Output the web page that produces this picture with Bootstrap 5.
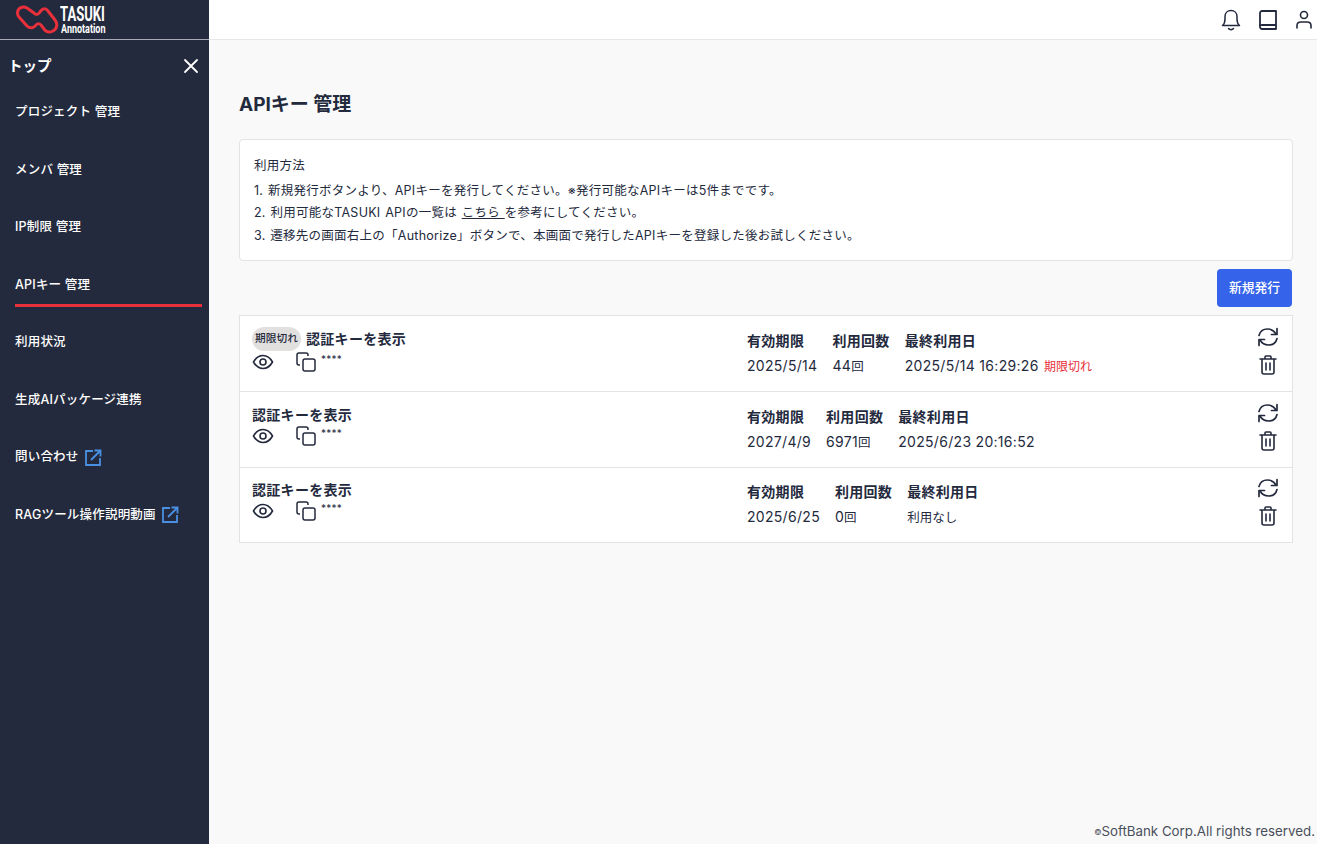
<!DOCTYPE html>
<html lang="ja">
<head>
<meta charset="utf-8">
<title>APIキー 管理</title>
<link href="https://cdn.jsdelivr.net/npm/bootstrap@5.3.0/dist/css/bootstrap.min.css" rel="stylesheet">
<style>
html,body{height:100%;}
body{font-family:"Inter","Noto Sans CJK JP",sans-serif;color:#242a3d;background:#f9f9f9;overflow:hidden;}
.app-shell{height:844px;}
.side-panel{width:209px;flex:none;background:#242a3d;color:#fff;}
.side-logo{height:40px;border-bottom:1px solid #a9acb8;padding-left:15px;gap:1px;}
.logo-words{color:#fff;font-family:"Liberation Sans Narrow","Roboto",sans-serif;width:50px;white-space:nowrap;}
.logo-top{font-size:21px;font-weight:700;line-height:17px;height:17px;transform:scaleX(.62);transform-origin:left center;}
.logo-sub{font-size:12.5px;font-weight:700;line-height:10px;height:10px;margin-top:1px;margin-left:1px;transform:scaleX(.72);transform-origin:left center;}
.side-top{height:51px;padding:0 10px 0 8px;font-size:14.5px;font-weight:700;}
.side-item{height:57.6px;padding:0 7px 0 15px;font-size:12.5px;letter-spacing:.2px;font-weight:500;color:#fff;text-decoration:none;display:flex;align-items:center;gap:5px;position:relative;}
.side-item.on::after{content:"";position:absolute;left:15px;right:7px;bottom:6.900px;height:3px;background:#e8303a;}
.side-list{margin-top:-7.500px;}
.top-strip{height:40px;background:#fff;border-bottom:1px solid #e7e7e7;padding-right:4px;gap:18px;}
.main-area{padding:0 24px 0 30px;}
.page-title{font-size:19px;font-weight:700;margin:54px 0 23px;line-height:22px;}
.guide-box{border:1px solid #e3e3e3;border-radius:4px;background:#fff;height:122px;padding:15px 14px;font-size:12.5px;letter-spacing:.25px;word-spacing:1px;line-height:22.5px;margin-bottom:8px;}
.guide-title{margin-bottom:2px;}
.guide-box a{color:inherit;}
.new-btn{background:#3563e9;border:0;border-radius:4px;color:#fff;font-size:12.8px;font-weight:500;width:75px;height:38px;padding:0;margin-right:1px;}
.new-btn:hover{background:#3563e9;}
.key-list{margin-top:8px;border:1px solid #e3e3e3;background:#fff;}
.key-row{height:76px;padding:0 12px;border-bottom:1px solid #e3e3e3;}
.key-row:last-child{border-bottom:0;height:74px;}
.key-left{width:495px;flex:none;margin-bottom:8px;}
.key-name{font-size:14px;letter-spacing:.3px;font-weight:700;line-height:20px;}
.expired-chip{background:#e2dfdf;border-radius:12px;font-size:10.700px;letter-spacing:0;font-weight:500;width:49px;height:24px;display:inline-flex;align-items:center;justify-content:center;margin-right:5px;}
.key-icons{gap:22px;height:22px;}
.copy-group{gap:5px;}
.stars{font-size:10px;letter-spacing:.2px;line-height:12px;align-self:flex-start;margin-top:1px;}
.meta-grid{font-size:14px;letter-spacing:.3px;gap:15px;flex:1;}
.meta-head{font-weight:600;line-height:20px;margin-bottom:5px;}
.meta-val{line-height:20px;white-space:nowrap;}
.jp-val{font-size:12.500px;letter-spacing:0;}
.expired-text{color:#e8303a;font-size:12px;letter-spacing:0;margin-left:1px;}
.action-col{width:24px;flex:none;gap:8px;margin-bottom:6px;}
.copyright{position:absolute;right:2px;bottom:3px;font-size:13.3px;line-height:18px;color:#4a4f5c;}
.copyright small{font-size:8px;vertical-align:1px;}
</style>
</head>
<body>
<div class="app-shell d-flex position-relative">
  <aside class="side-panel d-flex flex-column">
    <div class="side-logo d-flex align-items-center">
      <svg width="44" height="30" viewBox="0 0 44 30" fill="none" stroke="#e8303a" stroke-width="3" stroke-linejoin="round"><path d="M2.500 8C2.500 3 8 .5 12 3L19 8C21 10 23 10 25 7C27 3 31 3 33 6L40 15C43 19 42 24 38 26C34 28 31 27 29 24L26 20C24 18 23 18 21 20C19 23 15 24 12 21L4 12C3 11 2.500 10 2.500 8Z"/></svg>
      <div class="logo-words"><div class="logo-top">TASUKI</div><div class="logo-sub">Annotation</div></div>
    </div>
    <div class="side-top d-flex align-items-center justify-content-between">
      <span>トップ</span>
      <svg width="16" height="16" viewBox="0 0 16 16" stroke="#fff" stroke-width="1.800" stroke-linecap="round"><path d="M2 2L14 14M14 2L2 14"/></svg>
    </div>
    <nav class="side-list">
      <a class="side-item" href="#">プロジェクト 管理</a>
      <a class="side-item" href="#">メンバ 管理</a>
      <a class="side-item" href="#">IP制限 管理</a>
      <a class="side-item on" href="#">APIキー 管理</a>
      <a class="side-item" href="#">利用状況</a>
      <a class="side-item" href="#">生成AIパッケージ連携</a>
      <a class="side-item" href="#">問い合わせ
        <svg width="18" height="18" viewBox="0 0 18 18" fill="none" stroke="#4a90e2" stroke-width="1.800"><path d="M9 2H2V16H16V9"/><path d="M7 11L16 2M10.500 1.500H16.500V7.500"/></svg></a>
      <a class="side-item" href="#">RAGツール操作説明動画
        <svg width="18" height="18" viewBox="0 0 18 18" fill="none" stroke="#4a90e2" stroke-width="1.800"><path d="M9 2H2V16H16V9"/><path d="M7 11L16 2M10.500 1.500H16.500V7.500"/></svg></a>
    </nav>
  </aside>
  <div class="flex-grow-1 d-flex flex-column">
    <header class="top-strip d-flex align-items-center justify-content-end">
      <svg width="20" height="22" viewBox="0 0 20 22" fill="none" stroke="#242a3d" stroke-width="1.500" stroke-linejoin="round" stroke-linecap="round"><path d="M1.500 16.500C3.500 15 4 13 4 10V7.500C4 4 6.500 1.500 10 1.500S16 4 16 7.500V10C16 13 16.500 15 18.500 16.500Z"/><path d="M7.500 19.500C8.500 21 11.500 21 12.500 19.500"/></svg>
      <svg width="18" height="20" viewBox="0 0 18 20" fill="none" stroke="#242a3d" stroke-width="1.800" stroke-linejoin="round"><path d="M3 1H17V19H3C2 19 1 18 1 17V3C1 2 2 1 3 1Z"/><path d="M1 16C1 15 2 15 3 15H17"/></svg>
      <svg width="18" height="20" viewBox="0 0 18 20" fill="none" stroke="#242a3d" stroke-width="1.600" stroke-linecap="round"><circle cx="9" cy="5" r="3.500"/><path d="M2 18V15.500C2 13 4 12 6 12H12C14 12 16 13 16 15.500V18"/></svg>
    </header>
    <main class="main-area flex-grow-1">
      <h1 class="page-title">APIキー 管理</h1>
      <section class="guide-box">
        <div class="guide-title">利用方法</div>
        <div>1. 新規発行ボタンより、APIキーを発行してください。※発行可能なAPIキーは5件までです。</div>
        <div>2. 利用可能なTASUKI APIの一覧は <a href="#">こちら&nbsp;</a>を参考にしてください。</div>
        <div>3. 遷移先の画面右上の「Authorize」ボタンで、本画面で発行したAPIキーを登録した後お試しください。</div>
      </section>
      <div class="d-flex justify-content-end"><button class="btn new-btn" type="button">新規発行</button></div>
      <div class="key-list">
        <div class="key-row d-flex align-items-center">
          <div class="key-left">
            <div class="key-name d-flex align-items-center"><span class="expired-chip">期限切れ</span>認証キーを表示</div>
            <div class="key-icons d-flex align-items-center">
              <svg width="22" height="16" viewBox="0 0 22 16" fill="none" stroke="#242a3d" stroke-width="1.600"><path d="M1.500 8C4 3.500 7 1.500 11 1.500S18 3.500 20.500 8C18 12.500 15 14.500 11 14.500S4 12.500 1.500 8Z"/><circle cx="11" cy="8" r="3"/></svg>
              <div class="copy-group d-flex align-items-center">
                <svg width="20" height="20" viewBox="0 0 20 20" fill="none" stroke="#242a3d" stroke-width="1.500" stroke-linejoin="round"><rect x="7" y="7" width="12" height="12" rx="2"/><path d="M4 13H3C2 13 1 12 1 11V3C1 2 2 1 3 1H10C11 1 12 2 12 3V4"/></svg>
                <span class="stars">****</span>
              </div>
            </div>
          </div>
          <div class="meta-grid d-flex">
            <div><div class="meta-head">有効期限</div><div class="meta-val">2025/5/14</div></div>
            <div><div class="meta-head">利用回数</div><div class="meta-val">44<span class="jp-val">回</span></div></div>
            <div><div class="meta-head">最終利用日</div><div class="meta-val">2025/5/14 16:29:26 <span class="expired-text">期限切れ</span></div></div>
          </div>
          <div class="action-col d-flex flex-column align-items-center">
            <svg width="22" height="20" viewBox="0 0 22 20" fill="none" stroke="#242a3d" stroke-width="1.700" stroke-linecap="round" stroke-linejoin="round"><path d="M2 8.500C3 4.500 6.500 2 10.500 2C14 2 17 3.500 19 7"/><path d="M20 1.500V7.500H14.500"/><path d="M20 11.500C19 15.500 15.500 18 11.500 18C8 18 5 16.500 3 13"/><path d="M2 18.500V12.500H7.500"/></svg>
            <svg width="18" height="20" viewBox="0 0 18 20" fill="none" stroke="#242a3d" stroke-width="1.600" stroke-linecap="round" stroke-linejoin="round"><path d="M1 4H17M6 4V2C6 1.500 6.500 1 7 1H11C11.500 1 12 1.500 12 2V4M3 4V17C3 18 4 19 5 19H13C14 19 15 18 15 17V4M7 8V15M11 8V15"/></svg>
          </div>
        </div>
        <div class="key-row d-flex align-items-center">
          <div class="key-left">
            <div class="key-name">認証キーを表示</div>
            <div class="key-icons d-flex align-items-center">
              <svg width="22" height="16" viewBox="0 0 22 16" fill="none" stroke="#242a3d" stroke-width="1.600"><path d="M1.500 8C4 3.500 7 1.500 11 1.500S18 3.500 20.500 8C18 12.500 15 14.500 11 14.500S4 12.500 1.500 8Z"/><circle cx="11" cy="8" r="3"/></svg>
              <div class="copy-group d-flex align-items-center">
                <svg width="20" height="20" viewBox="0 0 20 20" fill="none" stroke="#242a3d" stroke-width="1.500" stroke-linejoin="round"><rect x="7" y="7" width="12" height="12" rx="2"/><path d="M4 13H3C2 13 1 12 1 11V3C1 2 2 1 3 1H10C11 1 12 2 12 3V4"/></svg>
                <span class="stars">****</span>
              </div>
            </div>
          </div>
          <div class="meta-grid d-flex">
            <div><div class="meta-head">有効期限</div><div class="meta-val">2027/4/9</div></div>
            <div><div class="meta-head">利用回数</div><div class="meta-val">6971<span class="jp-val">回</span></div></div>
            <div><div class="meta-head">最終利用日</div><div class="meta-val">2025/6/23 20:16:52</div></div>
          </div>
          <div class="action-col d-flex flex-column align-items-center">
            <svg width="22" height="20" viewBox="0 0 22 20" fill="none" stroke="#242a3d" stroke-width="1.700" stroke-linecap="round" stroke-linejoin="round"><path d="M2 8.500C3 4.500 6.500 2 10.500 2C14 2 17 3.500 19 7"/><path d="M20 1.500V7.500H14.500"/><path d="M20 11.500C19 15.500 15.500 18 11.500 18C8 18 5 16.500 3 13"/><path d="M2 18.500V12.500H7.500"/></svg>
            <svg width="18" height="20" viewBox="0 0 18 20" fill="none" stroke="#242a3d" stroke-width="1.600" stroke-linecap="round" stroke-linejoin="round"><path d="M1 4H17M6 4V2C6 1.500 6.500 1 7 1H11C11.500 1 12 1.500 12 2V4M3 4V17C3 18 4 19 5 19H13C14 19 15 18 15 17V4M7 8V15M11 8V15"/></svg>
          </div>
        </div>
        <div class="key-row d-flex align-items-center">
          <div class="key-left">
            <div class="key-name">認証キーを表示</div>
            <div class="key-icons d-flex align-items-center">
              <svg width="22" height="16" viewBox="0 0 22 16" fill="none" stroke="#242a3d" stroke-width="1.600"><path d="M1.500 8C4 3.500 7 1.500 11 1.500S18 3.500 20.500 8C18 12.500 15 14.500 11 14.500S4 12.500 1.500 8Z"/><circle cx="11" cy="8" r="3"/></svg>
              <div class="copy-group d-flex align-items-center">
                <svg width="20" height="20" viewBox="0 0 20 20" fill="none" stroke="#242a3d" stroke-width="1.500" stroke-linejoin="round"><rect x="7" y="7" width="12" height="12" rx="2"/><path d="M4 13H3C2 13 1 12 1 11V3C1 2 2 1 3 1H10C11 1 12 2 12 3V4"/></svg>
                <span class="stars">****</span>
              </div>
            </div>
          </div>
          <div class="meta-grid d-flex">
            <div><div class="meta-head">有効期限</div><div class="meta-val">2025/6/25</div></div>
            <div><div class="meta-head">利用回数</div><div class="meta-val">0<span class="jp-val">回</span></div></div>
            <div><div class="meta-head">最終利用日</div><div class="meta-val"><span class="jp-val">利用なし</span></div></div>
          </div>
          <div class="action-col d-flex flex-column align-items-center">
            <svg width="22" height="20" viewBox="0 0 22 20" fill="none" stroke="#242a3d" stroke-width="1.700" stroke-linecap="round" stroke-linejoin="round"><path d="M2 8.500C3 4.500 6.500 2 10.500 2C14 2 17 3.500 19 7"/><path d="M20 1.500V7.500H14.500"/><path d="M20 11.500C19 15.500 15.500 18 11.500 18C8 18 5 16.500 3 13"/><path d="M2 18.500V12.500H7.500"/></svg>
            <svg width="18" height="20" viewBox="0 0 18 20" fill="none" stroke="#242a3d" stroke-width="1.600" stroke-linecap="round" stroke-linejoin="round"><path d="M1 4H17M6 4V2C6 1.500 6.500 1 7 1H11C11.500 1 12 1.500 12 2V4M3 4V17C3 18 4 19 5 19H13C14 19 15 18 15 17V4M7 8V15M11 8V15"/></svg>
          </div>
        </div>
      </div>
    </main>
  </div>
  <div class="copyright"><small>©</small>SoftBank Corp.All rights reserved.</div>
</div>
<script src="https://cdn.jsdelivr.net/npm/bootstrap@5.3.0/dist/js/bootstrap.bundle.min.js"></script>
</body>
</html>
